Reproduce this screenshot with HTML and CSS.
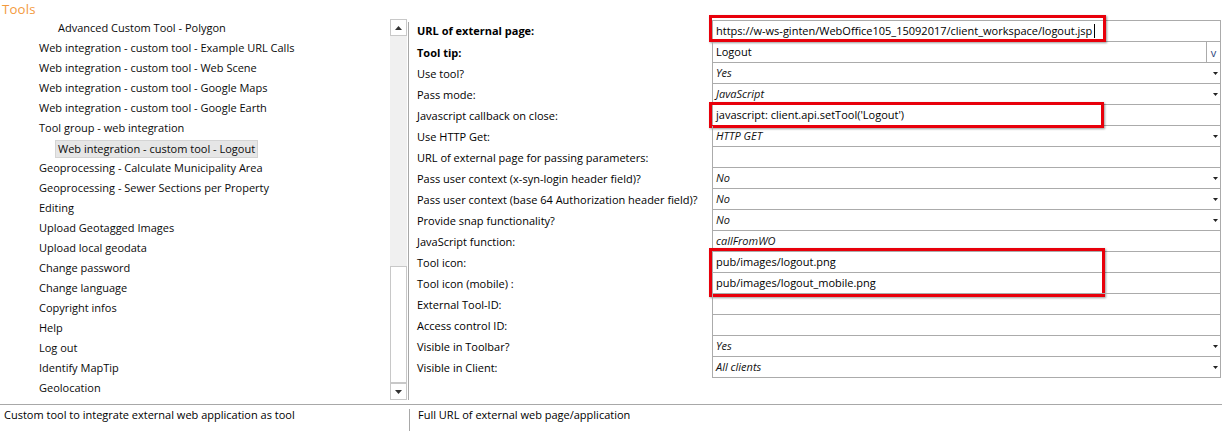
FILE: index.html
```html
<!DOCTYPE html>
<html>
<head>
<meta charset="utf-8">
<title>Tools</title>
<link rel="stylesheet" href="styles.css">
</head>
<body>
<div class="app">
  <div class="title">Tools</div>
  <div class="main">
    <div class="tree-pane">
      <ul class="tree">
        <li class="lvl2">Advanced Custom Tool - Polygon</li>
        <li class="lvl1">Web integration - custom tool - Example URL Calls</li>
        <li class="lvl1">Web integration - custom tool - Web Scene</li>
        <li class="lvl1">Web integration - custom tool - Google Maps</li>
        <li class="lvl1">Web integration - custom tool - Google Earth</li>
        <li class="lvl1">Tool group - web integration</li>
        <li class="selected"><span class="sel">Web integration - custom tool - Logout</span></li>
        <li class="lvl1">Geoprocessing - Calculate Municipality Area</li>
        <li class="lvl1">Geoprocessing - Sewer Sections per Property</li>
        <li class="lvl1">Editing</li>
        <li class="lvl1">Upload Geotagged Images</li>
        <li class="lvl1">Upload local geodata</li>
        <li class="lvl1">Change password</li>
        <li class="lvl1">Change language</li>
        <li class="lvl1">Copyright infos</li>
        <li class="lvl1">Help</li>
        <li class="lvl1">Log out</li>
        <li class="lvl1">Identify MapTip</li>
        <li class="lvl1">Geolocation</li>
      </ul>
      <div class="scrollbar">
        <div class="sb-btn"><svg width="7" height="4" viewBox="0 0 7 4"><path d="M0 4H7L3.5 0Z"/></svg></div>
        <div class="sb-track"></div>
        <div class="sb-thumb"></div>
        <div class="sb-btn"><svg width="7" height="4" viewBox="0 0 7 4"><path d="M0 0H7L3.5 4Z"/></svg></div>
      </div>
      <div class="vline"></div>
    </div>
    <div class="props-pane">
      <div class="grid">
        <div class="row first">
          <div class="label bold">URL of external page:</div>
          <div class="value"><span class="val">https://w-ws-ginten/WebOffice105_15092017/client_workspace/logout.jsp</span><span class="caret"></span><div class="hl hl-url"></div></div>
        </div>
        <div class="row">
          <div class="label bold">Tool tip:</div>
          <div class="value"><span class="val">Logout</span><span class="vbtn">v</span></div>
        </div>
        <div class="row">
          <div class="label">Use tool?</div>
          <div class="value"><span class="val it">Yes</span><svg class="arrow" width="5" height="3" viewBox="0 0 5 3"><path d="M0 0H5L2.5 3Z"/></svg></div>
        </div>
        <div class="row">
          <div class="label">Pass mode:</div>
          <div class="value"><span class="val it">JavaScript</span><svg class="arrow" width="5" height="3" viewBox="0 0 5 3"><path d="M0 0H5L2.5 3Z"/></svg></div>
        </div>
        <div class="row">
          <div class="label">Javascript callback on close:</div>
          <div class="value"><span class="val">javascript: client.api.setTool('Logout')</span><div class="hl hl-js"></div></div>
        </div>
        <div class="row">
          <div class="label">Use HTTP Get:</div>
          <div class="value"><span class="val it">HTTP GET</span><svg class="arrow" width="5" height="3" viewBox="0 0 5 3"><path d="M0 0H5L2.5 3Z"/></svg></div>
        </div>
        <div class="row">
          <div class="label">URL of external page for passing parameters:</div>
          <div class="value"></div>
        </div>
        <div class="row">
          <div class="label">Pass user context (x-syn-login header field)?</div>
          <div class="value"><span class="val it">No</span><svg class="arrow" width="5" height="3" viewBox="0 0 5 3"><path d="M0 0H5L2.5 3Z"/></svg></div>
        </div>
        <div class="row">
          <div class="label">Pass user context (base 64 Authorization header field)?</div>
          <div class="value"><span class="val it">No</span><svg class="arrow" width="5" height="3" viewBox="0 0 5 3"><path d="M0 0H5L2.5 3Z"/></svg></div>
        </div>
        <div class="row">
          <div class="label">Provide snap functionality?</div>
          <div class="value"><span class="val it">No</span><svg class="arrow" width="5" height="3" viewBox="0 0 5 3"><path d="M0 0H5L2.5 3Z"/></svg></div>
        </div>
        <div class="row">
          <div class="label">JavaScript function:</div>
          <div class="value"><span class="val it">callFromWO</span></div>
        </div>
        <div class="row">
          <div class="label">Tool icon:</div>
          <div class="value"><span class="val">pub/images/logout.png</span><div class="hl hl-icon"></div></div>
        </div>
        <div class="row">
          <div class="label">Tool icon (mobile) :</div>
          <div class="value"><span class="val">pub/images/logout_mobile.png</span></div>
        </div>
        <div class="row">
          <div class="label">External Tool-ID:</div>
          <div class="value"></div>
        </div>
        <div class="row">
          <div class="label">Access control ID:</div>
          <div class="value"></div>
        </div>
        <div class="row">
          <div class="label">Visible in Toolbar?</div>
          <div class="value"><span class="val it">Yes</span><svg class="arrow" width="5" height="3" viewBox="0 0 5 3"><path d="M0 0H5L2.5 3Z"/></svg></div>
        </div>
        <div class="row">
          <div class="label">Visible in Client:</div>
          <div class="value"><span class="val it">All clients</span><svg class="arrow" width="5" height="3" viewBox="0 0 5 3"><path d="M0 0H5L2.5 3Z"/></svg></div>
        </div>
      </div>
    </div>
  </div>
  <div class="status">
    <div class="status-left">Custom tool to integrate external web application as tool</div>
    <div class="status-sep"></div>
    <div class="status-right">Full URL of external web page/application</div>
  </div>
</div>
</body>
</html>
```

FILE: styles.css
```css
* { box-sizing: border-box; }
html, body { margin: 0; padding: 0; background: #fff; }
body {
  font-family: "Open Sans", "Noto Sans", sans-serif;
  font-size: 11px;
  color: #000;
}
.app {
  width: 1225px;
  height: 431px;
  overflow: hidden;
  display: flex;
  flex-direction: column;
}
.title {
  height: 18px;
  line-height: 18px;
  font-size: 13.2px;
  letter-spacing: 0.2px;
  font-weight: 400;
  color: #f39a3d;
  padding-left: 2px;
}
.main {
  height: 387px;
  display: flex;
  border-bottom: 1px solid #a8a8a8;
  margin-right: 3px;
}
.tree-pane {
  width: 409px;
  flex-shrink: 0;
  display: flex;
}
.tree {
  list-style: none;
  margin: 0;
  padding: 0;
  width: 390px;
}
.tree li {
  height: 20px;
  line-height: 20px;
  white-space: nowrap;
  color: #0a0a0a;
}
.tree .lvl1 { padding-left: 39px; }
.tree .lvl2 { padding-left: 58px; }
.tree .selected {
  padding-left: 55px;
  display: flex;
  align-items: flex-end;
}
.sel {
  height: 18px;
  line-height: 16px;
  padding: 0 2px;
  background: #e6e6e6;
  border: 1px solid #d4d4d4;
}
.scrollbar {
  width: 17px;
  height: 381px;
  margin-top: 1px;
  display: flex;
  flex-direction: column;
}
.sb-btn {
  height: 17px;
  border: 1px solid #c8c8c8;
  background: #fff;
  display: flex;
  align-items: center;
  justify-content: center;
}
.sb-btn svg { fill: #333; }
.sb-track { height: 230px; background: #f0f0f0; }
.sb-thumb { height: 117px; border: 1px solid #c8c8c8; background: #fff; }
.vline {
  width: 1px;
  margin: 4px 0 4px 1px;
  background: #a8a8a8;
}
.props-pane {
  flex: 1;
  padding: 2px 0 0 8px;
}
.row {
  display: flex;
  height: 21px;
}
.row.first { height: 22px; }
.label {
  width: 295px;
  line-height: 21px;
  white-space: nowrap;
}
.row.first .label { line-height: 22px; }
.bold { font-weight: 700; }
.value {
  position: relative;
  width: 509px;
  border: 1px solid #ababab;
  border-top: none;
  display: flex;
  align-items: center;
  padding-left: 3px;
}
.row.first .value { border-top: 1px solid #ababab; }
.val {
  line-height: 20px;
  white-space: nowrap;
}
.it { font-style: italic; color: #111; }
.arrow {
  margin-left: auto;
  margin-right: 2px;
  fill: #222;
}
.vbtn {
  margin-left: auto;
  width: 14px;
  align-self: stretch;
  border-left: 1px solid #ababab;
  display: flex;
  align-items: center;
  justify-content: center;
  color: #2a3f7a;
}
.caret {
  width: 1px;
  height: 14px;
  background: #000;
  margin-left: 2px;
}
.hl {
  position: absolute;
  border: 3px solid #e8000b;
  box-shadow: 1px 1px 2px rgba(0, 0, 0, 0.4);
  pointer-events: none;
}
.hl-url { left: -4px; top: -6px; width: 397px; height: 27px; }
.hl-js { left: -4px; top: -3px; width: 395px; height: 26px; }
.hl-icon { left: -4px; top: -4px; width: 396px; height: 49px; }
.status {
  height: 26px;
  display: flex;
}
.status-left {
  width: 409px;
  padding: 2px 0 0 4px;
  line-height: 16px;
  white-space: nowrap;
}
.status-sep {
  width: 1px;
  margin-top: 4px;
  background: #a8a8a8;
}
.status-right {
  padding: 2px 0 0 8px;
  line-height: 16px;
  white-space: nowrap;
}
```
